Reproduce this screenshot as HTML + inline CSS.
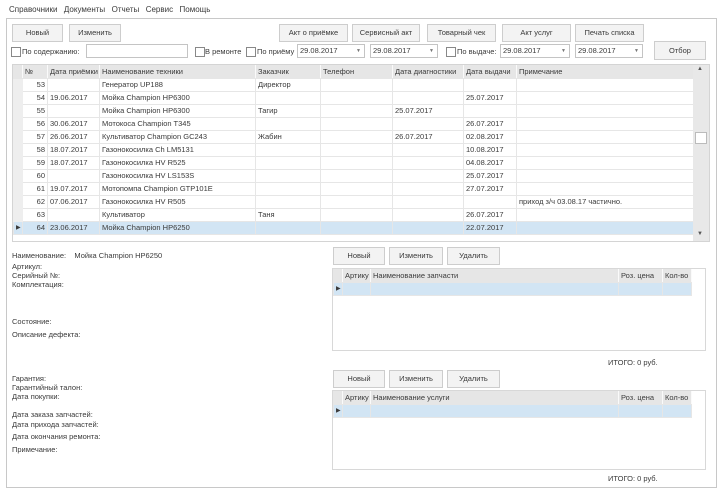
<!DOCTYPE html>
<html><head><meta charset="utf-8"><style>
*{margin:0;padding:0;box-sizing:border-box}
body{width:720px;height:480px;background:#fff;font-family:"Liberation Sans","DejaVu Sans",sans-serif;font-size:7.5px;color:#3a3a3a;position:relative;overflow:hidden}
.a{position:absolute;white-space:nowrap}
.btn{position:absolute;background:#f3f3f3;border:1px solid #cdcdcd;text-align:center;font-size:7.5px}
.cb{position:absolute;width:10px;height:10px;border:1px solid #888;background:#fff}
.tb{position:absolute;border:1px solid #c4c4c4;background:#fff;height:14px;line-height:12px;padding-left:2px}
.dd{position:absolute;right:3px;top:0;font-size:5px;color:#777}
table{border-collapse:collapse;position:absolute;table-layout:fixed}
td{border:1px solid #e6e6e6;height:13px;padding:0 2px;overflow:hidden;white-space:nowrap;font-size:7.5px;line-height:12px}
tr.h td{background:#e6e6e6;border-color:#e6e6e6;border-right-color:#fafafa}
tr.s td{background:#d2e5f4}
td.rh{background:#eeeeee;border-color:#eeeeee}
</style></head><body>
<div class="a" style="left:9px;top:5px;font-size:8px;word-spacing:1px">Справочники&nbsp; Документы&nbsp; Отчеты&nbsp; Сервис&nbsp; Помощь</div>
<div class="a" style="left:6px;top:18px;width:711px;height:470px;border:1px solid #c8c8c8"></div>

<div class="btn" style="left:12px;top:24px;width:51px;height:18px;line-height:16px">Новый</div>
<div class="btn" style="left:69px;top:24px;width:52px;height:18px;line-height:16px">Изменить</div>
<div class="btn" style="left:279px;top:24px;width:69px;height:18px;line-height:16px">Акт о приёмке</div>
<div class="btn" style="left:352px;top:24px;width:68px;height:18px;line-height:16px">Сервисный акт</div>
<div class="btn" style="left:427px;top:24px;width:69px;height:18px;line-height:16px">Товарный чек</div>
<div class="btn" style="left:502px;top:24px;width:69px;height:18px;line-height:16px">Акт услуг</div>
<div class="btn" style="left:575px;top:24px;width:69px;height:18px;line-height:16px">Печать списка</div>

<div class="cb" style="left:11px;top:47px"></div><div class="a" style="left:22px;top:47px">По содержанию:</div>
<div class="tb" style="left:86px;top:44px;width:102px"></div>
<div class="cb" style="left:195px;top:47px"></div><div class="a" style="left:205px;top:47px">В ремонте</div>
<div class="cb" style="left:246px;top:47px"></div><div class="a" style="left:257px;top:47px">По приёму</div>
<div class="tb" style="left:297px;top:44px;width:68px">29.08.2017<span class="dd">▼</span></div>
<div class="tb" style="left:370px;top:44px;width:68px">29.08.2017<span class="dd">▼</span></div>
<div class="cb" style="left:446px;top:47px"></div><div class="a" style="left:457px;top:47px">По выдаче:</div>
<div class="tb" style="left:500px;top:44px;width:70px">29.08.2017<span class="dd">▼</span></div>
<div class="tb" style="left:575px;top:44px;width:68px">29.08.2017<span class="dd">▼</span></div>
<div class="btn" style="left:654px;top:41px;width:52px;height:19px;line-height:17px">Отбор</div>

<div class="a" style="left:12px;top:64px;width:698px;height:178px;border:1px solid #d4d4d4"></div>
<table style="left:13px;top:65px;width:680px">
<colgroup><col style="width:9px"><col style="width:25px"><col style="width:52px"><col style="width:156px"><col style="width:65px"><col style="width:72px"><col style="width:71px"><col style="width:53px"><col style="width:177px"></colgroup>
<tr class="h"><td></td><td>№</td><td>Дата приёмки</td><td>Наименование техники</td><td>Заказчик</td><td>Телефон</td><td>Дата диагностики</td><td>Дата выдачи</td><td>Примечание</td></tr>
<tr><td class="rh"></td><td align="right">53</td><td></td><td>Генератор UP188</td><td>Директор</td><td></td><td></td><td></td><td></td></tr>
<tr><td class="rh"></td><td align="right">54</td><td>19.06.2017</td><td>Мойка Champion HP6300</td><td></td><td></td><td></td><td>25.07.2017</td><td></td></tr>
<tr><td class="rh"></td><td align="right">55</td><td></td><td>Мойка Champion HP6300</td><td>Тагир</td><td></td><td>25.07.2017</td><td></td><td></td></tr>
<tr><td class="rh"></td><td align="right">56</td><td>30.06.2017</td><td>Мотокоса Champion T345</td><td></td><td></td><td></td><td>26.07.2017</td><td></td></tr>
<tr><td class="rh"></td><td align="right">57</td><td>26.06.2017</td><td>Культиватор Champion GC243</td><td>Жабин</td><td></td><td>26.07.2017</td><td>02.08.2017</td><td></td></tr>
<tr><td class="rh"></td><td align="right">58</td><td>18.07.2017</td><td>Газонокосилка Ch LM5131</td><td></td><td></td><td></td><td>10.08.2017</td><td></td></tr>
<tr><td class="rh"></td><td align="right">59</td><td>18.07.2017</td><td>Газонокосилка HV R525</td><td></td><td></td><td></td><td>04.08.2017</td><td></td></tr>
<tr><td class="rh"></td><td align="right">60</td><td></td><td>Газонокосилка HV LS153S</td><td></td><td></td><td></td><td>25.07.2017</td><td></td></tr>
<tr><td class="rh"></td><td align="right">61</td><td>19.07.2017</td><td>Мотопомпа Champion GTP101E</td><td></td><td></td><td></td><td>27.07.2017</td><td></td></tr>
<tr><td class="rh"></td><td align="right">62</td><td>07.06.2017</td><td>Газонокосилка HV R505</td><td></td><td></td><td></td><td></td><td>приход з/ч 03.08.17 частично.</td></tr>
<tr><td class="rh"></td><td align="right">63</td><td></td><td>Культиватор</td><td>Таня</td><td></td><td></td><td>26.07.2017</td><td></td></tr>
<tr class="s"><td style="font-size:6px">▶</td><td align="right">64</td><td>23.06.2017</td><td>Мойка Champion HP6250</td><td></td><td></td><td></td><td>22.07.2017</td><td></td></tr>
</table>
<div class="a" style="left:693px;top:65px;width:16px;height:176px;background:#e8e8e8"></div>
<div class="a" style="left:697px;top:66px;font-size:6px;color:#555">▲</div>
<div class="a" style="left:697px;top:231px;font-size:6px;color:#555">▼</div>
<div class="a" style="left:695px;top:132px;width:12px;height:12px;background:#fff;border:1px solid #bbb"></div>

<div class="a" style="left:12px;top:251px">Наименование:&nbsp;&nbsp;&nbsp; Мойка Champion HP6250</div>
<div class="a" style="left:12px;top:262px">Артикул:</div>
<div class="a" style="left:12px;top:271px">Серийный №:</div>
<div class="a" style="left:12px;top:280px">Комплектация:</div>
<div class="a" style="left:12px;top:317px">Состояние:</div>
<div class="a" style="left:12px;top:330px">Описание дефекта:</div>
<div class="a" style="left:12px;top:374px">Гарантия:</div>
<div class="a" style="left:12px;top:383px">Гарантийный талон:</div>
<div class="a" style="left:12px;top:392px">Дата покупки:</div>
<div class="a" style="left:12px;top:410px">Дата заказа запчастей:</div>
<div class="a" style="left:12px;top:420px">Дата прихода запчастей:</div>
<div class="a" style="left:12px;top:432px">Дата окончания ремонта:</div>
<div class="a" style="left:12px;top:445px">Примечание:</div>

<div class="btn" style="left:333px;top:247px;width:52px;height:18px;line-height:16px">Новый</div>
<div class="btn" style="left:389px;top:247px;width:54px;height:18px;line-height:16px">Изменить</div>
<div class="btn" style="left:447px;top:247px;width:53px;height:18px;line-height:16px">Удалить</div>
<div class="a" style="left:332px;top:268px;width:374px;height:83px;border:1px solid #d8d8d8"></div>
<table style="left:333px;top:269px;width:358px">
<colgroup><col style="width:9px"><col style="width:28px"><col style="width:248px"><col style="width:44px"><col style="width:29px"></colgroup>
<tr class="h"><td></td><td>Артику</td><td>Наименование запчасти</td><td>Роз. цена</td><td>Кол-во</td></tr>
<tr class="s"><td style="font-size:6px">▶</td><td></td><td></td><td></td><td></td></tr>
</table>
<div class="a" style="left:608px;top:358px">ИТОГО: 0 руб.</div>

<div class="btn" style="left:333px;top:370px;width:52px;height:18px;line-height:16px">Новый</div>
<div class="btn" style="left:389px;top:370px;width:54px;height:18px;line-height:16px">Изменить</div>
<div class="btn" style="left:447px;top:370px;width:53px;height:18px;line-height:16px">Удалить</div>
<div class="a" style="left:332px;top:390px;width:374px;height:80px;border:1px solid #d8d8d8"></div>
<table style="left:333px;top:391px;width:358px">
<colgroup><col style="width:9px"><col style="width:28px"><col style="width:248px"><col style="width:44px"><col style="width:29px"></colgroup>
<tr class="h"><td></td><td>Артику</td><td>Наименование услуги</td><td>Роз. цена</td><td>Кол-во</td></tr>
<tr class="s"><td style="font-size:6px">▶</td><td></td><td></td><td></td><td></td></tr>
</table>
<div class="a" style="left:608px;top:474px">ИТОГО: 0 руб.</div>
</body></html>
